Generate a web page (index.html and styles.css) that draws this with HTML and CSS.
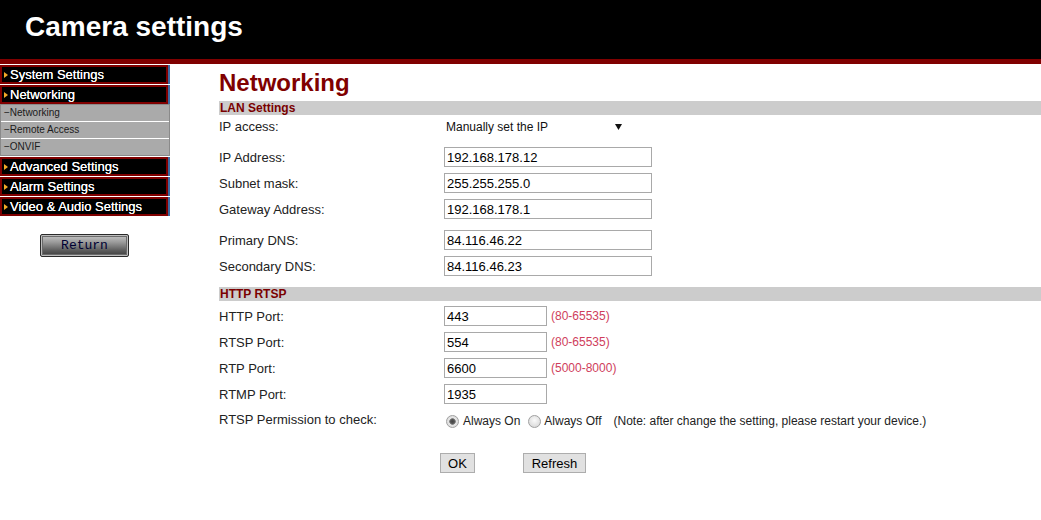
FILE: index.html
```html
<!DOCTYPE html>
<html>
<head>
<meta charset="utf-8">
<title>Camera settings</title>
<link rel="stylesheet" href="styles.css">
</head>
<body>
<header class="top">
  <h1 class="title">Camera settings</h1>
</header>
<div class="page">
  <nav class="side">
    <div class="mi"><span class="arr"></span>System Settings</div>
    <div class="mi"><span class="arr"></span>Networking</div>
    <div class="sub">
      <div class="si">&minus;Networking</div>
      <div class="si">&minus;Remote Access</div>
      <div class="si">&minus;ONVIF</div>
    </div>
    <div class="mi"><span class="arr"></span>Advanced Settings</div>
    <div class="mi"><span class="arr"></span>Alarm Settings</div>
    <div class="mi"><span class="arr"></span>Video &amp; Audio Settings</div>
    <div class="ret-wrap"><button class="ret">Return</button></div>
  </nav>
  <main class="main">
    <h2 class="head">Networking</h2>
    <div class="bar">LAN Settings</div>
    <div class="row row-sel">
      <span class="lbl">IP access:</span>
      <span class="sel">Manually set the IP<svg class="caret" width="7" height="6" viewBox="0 0 7 6"><path d="M0 0H7L3.5 6Z" fill="#111"/></svg></span>
    </div>
    <div class="row gap6"><span class="lbl">IP Address:</span><input class="in wide" value="192.168.178.12"></div>
    <div class="row"><span class="lbl">Subnet mask:</span><input class="in wide" value="255.255.255.0"></div>
    <div class="row"><span class="lbl">Gateway Address:</span><input class="in wide" value="192.168.178.1"></div>
    <div class="row gap5"><span class="lbl">Primary DNS:</span><input class="in wide" value="84.116.46.22"></div>
    <div class="row"><span class="lbl">Secondary DNS:</span><input class="in wide" value="84.116.46.23"></div>
    <div class="bar bar2">HTTP RTSP</div>
    <div class="row gap2"><span class="lbl">HTTP Port:</span><input class="in port" value="443"><span class="rng">(80-65535)</span></div>
    <div class="row"><span class="lbl">RTSP Port:</span><input class="in port" value="554"><span class="rng">(80-65535)</span></div>
    <div class="row"><span class="lbl">RTP Port:</span><input class="in port" value="6600"><span class="rng">(5000-8000)</span></div>
    <div class="row"><span class="lbl">RTMP Port:</span><input class="in port" value="1935"></div>
    <div class="row row-radio">
      <span class="lbl">RTSP Permission to check:</span>
      <span class="radios">
        <input type="radio" class="rad" name="perm" checked><span class="rt">Always On</span>
        <input type="radio" class="rad rad2" name="perm"><span class="rt">Always Off</span>
        <span class="note">(Note: after change the setting, please restart your device.)</span>
      </span>
    </div>
    <div class="btns">
      <button class="btn ok">OK</button>
      <button class="btn refresh">Refresh</button>
    </div>
  </main>
</div>
</body>
</html>
```

FILE: styles.css
```css
html, body {
  margin: 0;
  padding: 0;
  background: #fff;
  font-family: "Liberation Sans", Arial, sans-serif;
}

.top {
  height: 59px;
  background: #000;
  border-bottom: 5px solid #800000;
}

.title {
  margin: 0;
  padding: 11px 0 0 25px;
  font-size: 28px;
  line-height: 32px;
  font-weight: bold;
  color: #fff;
}

.page {
  display: flex;
  align-items: flex-start;
}

.side {
  width: 170px;
  flex: none;
  padding-top: 1px;
}

.mi {
  box-sizing: border-box;
  width: 168px;
  height: 19px;
  margin-bottom: 1px;
  border: 2px solid #800000;
  box-shadow: 2px 0 0 #3d6aa0;
  background: #000;
  color: #fff;
  font-size: 13px;
  line-height: 15px;
  padding-left: 2px;
  display: flex;
  align-items: center;
  white-space: nowrap;
  text-shadow: 0 0 0.4px #fff;
}

.arr {
  width: 0;
  height: 0;
  border-left: 4px solid #f2ab28;
  border-top: 3.5px solid transparent;
  border-bottom: 3.5px solid transparent;
  margin-right: 2px;
}

.sub {
  box-sizing: border-box;
  width: 170px;
  background: #aaa;
  border: 1px solid #8a8a8a;
  margin-top: -1px;
  margin-bottom: 1px;
}

.si {
  height: 16px;
  line-height: 16px;
  font-size: 10px;
  color: #1a1a1a;
  padding-left: 3px;
  border-bottom: 1px solid #fff;
}

.si:last-child {
  border-bottom: 0;
}

.ret-wrap {
  padding: 17px 0 0 40px;
}

.ret {
  box-sizing: border-box;
  width: 89px;
  height: 23px;
  border: 1px solid #2a2a2a;
  border-radius: 2px;
  background: linear-gradient(#c8c8c8 0%, #9a9a9a 35%, #5a5a5a 75%, #3c3c3c 100%);
  box-shadow: inset 0 0 0 1px #bdbdbd, inset 0 0 0 2px #6a6a6a;
  font-family: "Liberation Mono", "Courier New", monospace;
  font-size: 13px;
  color: #000033;
  padding: 0;
  cursor: pointer;
}

.main {
  flex: 1;
  margin-left: 49px;
}

.head {
  margin: 5px 0 4px 0;
  font-size: 24px;
  line-height: 28px;
  font-weight: bold;
  color: #800000;
}

.bar {
  height: 14px;
  line-height: 14px;
  background: #cccccc;
  font-size: 12px;
  font-weight: bold;
  color: #7a0000;
  padding-left: 1px;
}

.bar2 {
  margin-top: 8px;
}

.row {
  display: flex;
  align-items: center;
  height: 26px;
  font-size: 13px;
  color: #222;
}

.row-sel {
  height: 23px;
}

.gap6 { margin-top: 6px; }
.gap5 { margin-top: 5px; }
.gap2 { margin-top: 2px; }

.lbl {
  width: 225px;
  flex: none;
}

.sel {
  display: inline-flex;
  align-items: center;
  padding-left: 2px;
  font-size: 12px;
  color: #111;
}

.caret {
  margin-left: 67px;
}

.in {
  box-sizing: border-box;
  height: 20px;
  margin: 0;
  border: 1px solid #a9a9a9;
  padding: 0 2px;
  font-family: "Liberation Sans", Arial, sans-serif;
  font-size: 13px;
  color: #000;
  background: #fff;
}

.wide { width: 208px; }
.port { width: 103px; }

.rng {
  margin-left: 4px;
  font-size: 12px;
  color: #cf3e5c;
}

.row-radio {
  height: 24px;
}

.radios {
  display: inline-flex;
  align-items: center;
  font-size: 12px;
  color: #222;
  padding-top: 4px;
}

.rad {
  appearance: none;
  -webkit-appearance: none;
  box-sizing: border-box;
  width: 13px;
  height: 13px;
  margin: 0 4px 0 2px;
  border-radius: 50%;
  border: 1px solid #a0a0a0;
  background: radial-gradient(circle at 50% 40%, #fafafa 0%, #e2e2e2 60%, #cfcfcf 100%);
}

.rad:checked {
  background: radial-gradient(circle, #444 0, #555 2px, #888 3px, #e6e6e6 3.6px, #d4d4d4 100%);
}

.rad2 {
  margin-left: 8px;
  margin-right: 3px;
}

.note {
  margin-left: 12px;
}

.btns {
  display: flex;
  padding: 22px 0 0 221px;
}

.btn {
  box-sizing: border-box;
  height: 20px;
  border: 1px solid #adadad;
  background: #e1e1e1;
  font-family: "Liberation Sans", Arial, sans-serif;
  font-size: 13px;
  color: #000;
  padding: 0;
}

.ok { width: 35px; }
.refresh { width: 63px; margin-left: 48px; }
```
